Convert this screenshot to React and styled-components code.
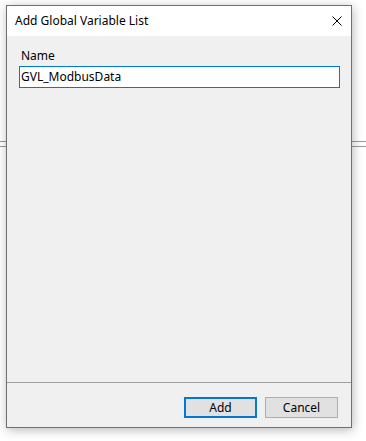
import React from "react";
import styled, { createGlobalStyle } from "styled-components";

const Global = createGlobalStyle`
  html, body { margin: 0; padding: 0; background: #ffffff; }
  body { font-family: "Noto Sans", "Open Sans", sans-serif; }
  * { box-sizing: border-box; }
`;

const Page = styled.div`
  width: 366px;
  height: 441px;
  overflow: hidden;
  padding: 5px 0 0 6px;
  background:
    linear-gradient(#9a9a9a, #9a9a9a) 0 141px / 100% 1px no-repeat,
    linear-gradient(#9a9a9a, #9a9a9a) 0 146px / 100% 1px no-repeat,
    #ffffff;
`;

const Dialog = styled.div`
  width: 346px;
  height: 423px;
  border: 1px solid #707070;
  background: #f0f0f0;
  display: flex;
  flex-direction: column;
  box-shadow: 1px 2px 10px rgba(0, 0, 0, 0.28);
  font-size: 12px;
  color: #000;
`;

const TitleBar = styled.div`
  height: 30px;
  background: #ffffff;
  display: flex;
  align-items: center;
  justify-content: space-between;
  padding: 0 9px 0 8px;
`;

const Title = styled.span`
  font-size: 12px;
  line-height: 16px;
`;

const CloseIcon = styled.svg`
  width: 10px;
  height: 10px;
  display: block;
`;

const Body = styled.div`
  flex: 1;
  padding: 12px 11px 0 12px;
  display: flex;
  flex-direction: column;
`;

const Label = styled.label`
  font-size: 12px;
  line-height: 16px;
  padding-left: 2px;
  margin-bottom: 2px;
`;

const TextInput = styled.div`
  height: 22px;
  border: 1px solid #0078d7;
  background: #ffffff;
  font-size: 12px;
  line-height: 18px;
  padding: 1px 1px;
  display: flex;
  align-items: center;
`;

const Footer = styled.div`
  border-top: 1px solid #a0a0a0;
  height: 45px;
  display: flex;
  justify-content: flex-end;
  align-items: flex-start;
  gap: 8px;
  padding: 14px 13px 0 0;
`;

const Button = styled.div`
  width: 73px;
  height: 21px;
  background: #e1e1e1;
  border: ${(p) => (p.$default ? "2px solid #0078d7" : "1px solid #adadad")};
  display: flex;
  align-items: center;
  justify-content: center;
  font-size: 12px;
  line-height: 16px;
`;

export default function App() {
  return (
    <>
      <Global />
      <Page>
        <Dialog>
          <TitleBar>
            <Title>Add Global Variable List</Title>
            <CloseIcon viewBox="0 0 10 10">
              <path d="M0.5 0.5 L9.5 9.5 M9.5 0.5 L0.5 9.5" stroke="#000" strokeWidth="1" fill="none" />
            </CloseIcon>
          </TitleBar>
          <Body>
            <Label>Name</Label>
            <TextInput>GVL_ModbusData</TextInput>
          </Body>
          <Footer>
            <Button $default>Add</Button>
            <Button>Cancel</Button>
          </Footer>
        </Dialog>
      </Page>
    </>
  );
}
